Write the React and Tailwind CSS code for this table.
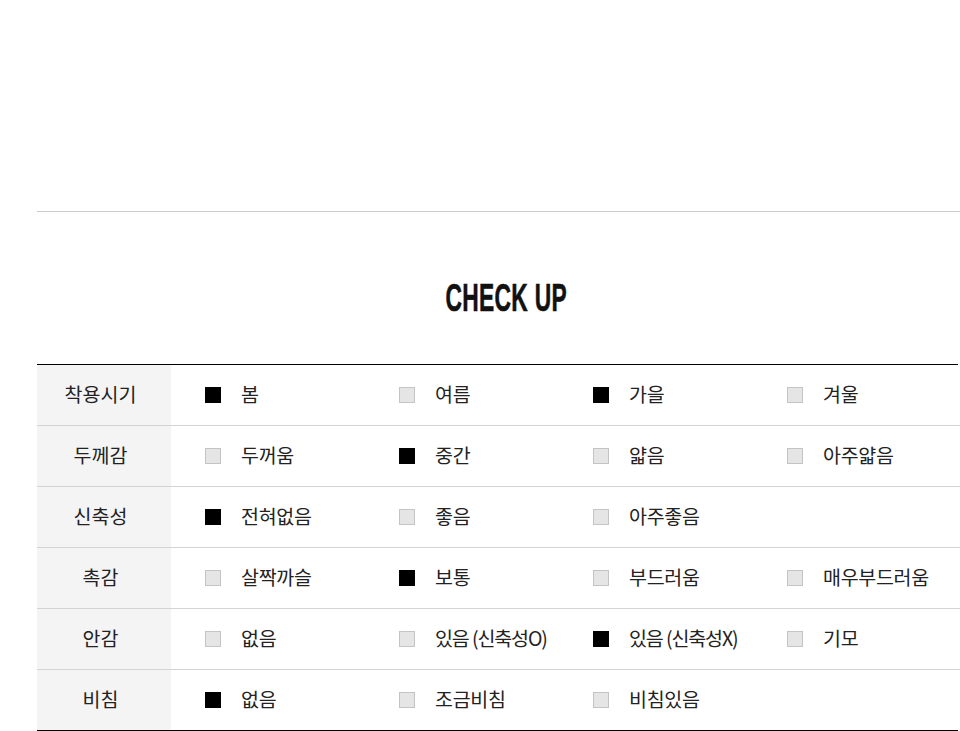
import React from "react";

const rows = [
  { label: "착용시기", opts: [["봄", 1], ["여름", 0], ["가을", 1], ["겨울", 0]] },
  { label: "두께감", opts: [["두꺼움", 0], ["중간", 1], ["얇음", 0], ["아주얇음", 0]] },
  { label: "신축성", opts: [["전혀없음", 1], ["좋음", 0], ["아주좋음", 0]] },
  { label: "촉감", opts: [["살짝까슬", 0], ["보통", 1], ["부드러움", 0], ["매우부드러움", 0]] },
  { label: "안감", opts: [["없음", 0], ["있음 (신축성O)", 0, 1], ["있음 (신축성X)", 1, 1], ["기모", 0]] },
  { label: "비침", opts: [["없음", 1], ["조금비침", 0], ["비침있음", 0]] },
];

function Box({ on }) {
  return on ? (
    <span className="block w-[16px] h-[16px] bg-black shrink-0" />
  ) : (
    <span className="block w-[16px] h-[16px] bg-[#e5e5e5] border border-[#c4c4c4] shrink-0" />
  );
}

export default function App() {
  return (
    <div
      className="w-[960px] h-[731px] bg-white overflow-hidden text-[#222]"
      style={{ fontFamily: '"Noto Sans CJK KR", "Noto Sans", sans-serif' }}
    >
      <div className="h-[211px]" />
      <div className="ml-[37px] border-t border-[#cccccc]" />
      <div className="h-[152px] flex items-center justify-center pl-[52px] pt-[20px]">
        <span
          className="inline-block text-[38px] font-bold leading-none tracking-[0.5px] scale-x-[0.6] origin-center text-[#111] [-webkit-text-stroke:0.6px_#111]"
          style={{ fontFamily: '"Liberation Sans", Arial, sans-serif' }}
        >
          CHECK UP
        </span>
      </div>
      <div className="ml-[37px]">
        <div className="mr-[2px] border-t border-black" />
        {rows.map((r, i) => (
          <div
            key={i}
            className={`flex h-[61px] ${i < rows.length - 1 ? "border-b border-[#d4d4d4]" : "border-b border-black mr-[2px]"}`}
          >
            <div className="w-[134px] shrink-0 bg-[#f4f4f4] flex items-center justify-center text-[19.5px] pb-[2px] pr-[7px]">
              {r.label}
            </div>
            <div className="flex-1 min-w-0 flex items-center pl-[34px]">
              {r.opts.map(([t, on, tight], j) => (
                <div key={j} className="w-[194px] shrink-0 flex items-center gap-[20px]">
                  <Box on={on} />
                  <span
                    className={`text-[19.5px] pb-[2px] whitespace-nowrap ${tight ? "tracking-[-1.1px]" : "tracking-[-0.3px]"}`}
                  >
                    {t}
                  </span>
                </div>
              ))}
            </div>
          </div>
        ))}
      </div>
    </div>
  );
}
